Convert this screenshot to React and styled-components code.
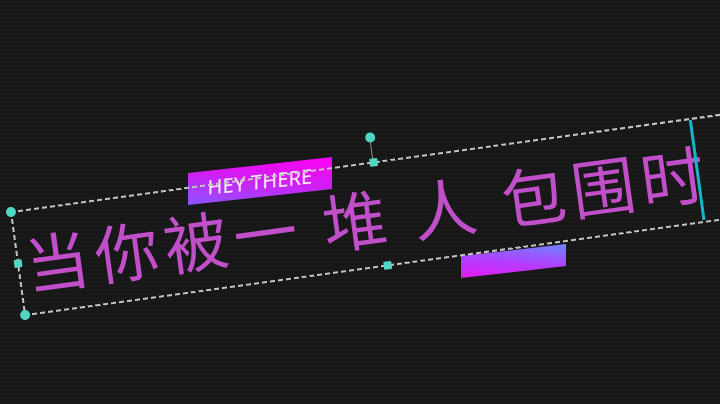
import React from "react";
import styled, { createGlobalStyle } from "styled-components";

const GlobalStyle = createGlobalStyle`
  html, body {
    margin: 0;
    padding: 0;
    background: #171717;
  }
`;

const BOX_W = 731;
const BOX_H = 104;
const ANGLE = -7.8;

const Canvas = styled.div`
  position: relative;
  width: 720px;
  height: 404px;
  overflow: hidden;
  background-color: #171717;
  background-image: radial-gradient(circle, #1c1c1c 0.8px, transparent 1.2px);
  background-size: 4px 4px;
`;

const Badge = styled.div`
  position: absolute;
  left: 188px;
  top: 173px;
  width: 144px;
  height: 32px;
  transform-origin: 0 0;
  transform: skewY(-6.3deg);
  background: linear-gradient(to bottom left, #ff00f2 0%, #d41cf4 45%, #8c55ff 100%);
  display: flex;
  align-items: center;
  justify-content: center;
`;

const BadgeText = styled.span`
  font-family: "Noto Sans", "DejaVu Sans", sans-serif;
  font-size: 20px;
  font-weight: 400;
  color: #fbe9fb;
  letter-spacing: 0.2px;
  line-height: 1;
  padding-top: 2px;
`;

const Bar = styled.div`
  position: absolute;
  left: 461px;
  top: 256px;
  width: 105px;
  height: 22px;
  transform-origin: 0 0;
  transform: skewY(-6.5deg);
  background: linear-gradient(to bottom left, #6d86ff 0%, #b43cff 55%, #e51af2 100%);
`;

const TextBox = styled.div`
  position: absolute;
  left: 11px;
  top: 212px;
  width: ${BOX_W}px;
  height: ${BOX_H}px;
  transform-origin: 0 0;
  transform: rotate(${ANGLE}deg);
  display: flex;
  align-items: center;
  padding-left: 7px;
  box-sizing: border-box;
`;

const Title = styled.span`
  font-family: "Noto Sans CJK SC", "Noto Sans", sans-serif;
  font-size: 64px;
  font-weight: 400;
  line-height: 98px;
  color: #c04fc9;
  letter-spacing: 6px;
  white-space: pre;
`;

const dash = (dir) =>
  `repeating-linear-gradient(${dir}, #c4c4c4 0 5px, transparent 5px 8px)`;

const Frame = styled.div`
  position: absolute;
  inset: -1px;
  pointer-events: none;
  background:
    ${dash("90deg")} top left / 100% 2px no-repeat,
    ${dash("90deg")} bottom left / 100% 2px no-repeat,
    ${dash("180deg")} top left / 2px 100% no-repeat,
    ${dash("180deg")} top right / 2px 100% no-repeat;
`;

const Cursor = styled.div`
  position: absolute;
  left: 684px;
  top: 1px;
  width: 2.5px;
  height: 101px;
  background: #16b6c8;
`;

const Handle = styled.div`
  position: absolute;
  left: ${(p) => p.x}px;
  top: ${(p) => p.y}px;
  width: ${(p) => (p.round ? 10 : 8)}px;
  height: ${(p) => (p.round ? 10 : 8)}px;
  margin: ${(p) => (p.round ? -5 : -4)}px 0 0 ${(p) => (p.round ? -5 : -4)}px;
  border-radius: ${(p) => (p.round ? "50%" : "1px")};
  background: #4fd7c4;
`;

const RotateStem = styled.div`
  position: absolute;
  left: ${BOX_W / 2 - 0.5}px;
  top: -25px;
  width: 1px;
  height: 25px;
  background: #8a8a8a;
`;

const handles = [
  { x: 0, y: 0, round: true },
  { x: 0, y: BOX_H, round: true },
  { x: BOX_W, y: 0, round: true },
  { x: BOX_W, y: BOX_H, round: true },
  { x: BOX_W / 2, y: 0 },
  { x: BOX_W / 2, y: BOX_H },
  { x: 0, y: BOX_H / 2 },
  { x: BOX_W, y: BOX_H / 2 },
  { x: BOX_W / 2, y: -25, round: true },
];

export default function App() {
  return (
    <>
      <GlobalStyle />
      <Canvas>
        <Badge>
          <BadgeText>HEY THERE</BadgeText>
        </Badge>
        <Bar />
        <TextBox>
          <Title>{"当你被一 堆 人 包围时"}</Title>
          <Frame />
          <Cursor />
          <RotateStem />
          {handles.map((h, i) => (
            <Handle key={i} x={h.x} y={h.y} round={h.round} />
          ))}
        </TextBox>
      </Canvas>
    </>
  );
}
